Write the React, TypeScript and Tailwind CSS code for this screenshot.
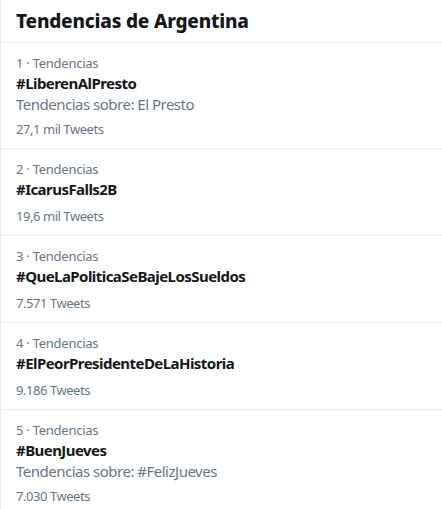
import React from 'react';

type Trend = {
  pos: number;
  tag: string;
  about?: string;
  count: string;
};

const trends: Trend[] = [
  { pos: 1, tag: '#LiberenAlPresto', about: 'Tendencias sobre: El Presto', count: '27,1 mil Tweets' },
  { pos: 2, tag: '#IcarusFalls2B', count: '19,6 mil Tweets' },
  { pos: 3, tag: '#QueLaPoliticaSeBajeLosSueldos', count: '7.571 Tweets' },
  { pos: 4, tag: '#ElPeorPresidenteDeLaHistoria', count: '9.186 Tweets' },
  { pos: 5, tag: '#BuenJueves', about: 'Tendencias sobre: #FelizJueves', count: '7.030 Tweets' },
];

export default function App() {
  return (
    <div className="w-[442px] h-[509px] overflow-hidden bg-white border-l border-[#e6ecf0] font-['Segoe_UI','Noto_Sans',sans-serif] text-[#14171a]">
      {/* encabezado */}
      <div className="h-[43px] px-[15px] flex items-center border-b border-[#e6ecf0]">
        <h2 className="text-[19px] font-extrabold leading-none tracking-[-0.2px]">Tendencias de Argentina</h2>
      </div>

      {/* lista de tendencias */}
      <ul>
        {trends.map((t) => (
          <li key={t.pos} className="px-[15px] pt-[11px] pb-[10px] border-b border-[#e6ecf0]">
            <div className="text-[13px] leading-[18px] text-[#657786] tracking-[-0.25px]">
              {t.pos} · Tendencias
            </div>
            <div className="mt-px text-[15px] leading-[20px] font-bold tracking-[-0.55px]">{t.tag}</div>
            {t.about && (
              <div className="mt-px text-[15px] leading-[20px] text-[#657786] tracking-[-0.5px]">{t.about}</div>
            )}
            <div className={`${t.about ? 'mt-[6px]' : 'mt-[8px]'} text-[13px] leading-[18px] text-[#657786] tracking-[-0.45px]`}>
              {t.count}
            </div>
          </li>
        ))}
      </ul>
    </div>
  );
}
